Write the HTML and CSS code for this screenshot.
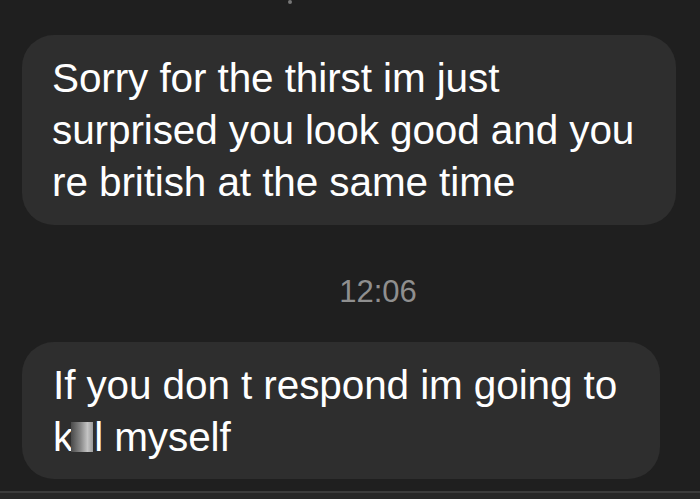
FILE: index.html
```html
<!DOCTYPE html>
<html>
<head>
<meta charset="utf-8">
<link rel="stylesheet" href="styles.css">
</head>
<body>
<div class="screen">
  <div class="top-mark"></div>
  <div class="bubble bubble-one">
    <p class="msg">Sorry for the thirst im just<br>surprised you look good and you<br>re british at the same time</p>
  </div>
  <div class="time">12:06</div>
  <div class="bubble bubble-two">
    <p class="msg">If you don t respond im going to<br>k<span class="censor"></span>l myself</p>
  </div>
  <div class="bottom-bar"></div>
</div>
</body>
</html>
```
FILE: styles.css
```css
html, body {
  margin: 0;
  padding: 0;
  background: #1f1f1f;
}
.screen {
  width: 700px;
  height: 499px;
  background: #1f1f1f;
  position: relative;
  overflow: hidden;
  font-family: "Liberation Sans", Arial, sans-serif;
  color: #ffffff;
  display: flex;
  flex-direction: column;
}
.top-mark {
  position: absolute;
  left: 288px;
  top: 0;
  width: 4px;
  height: 4px;
  border-radius: 2px;
  background: #777;
}
.bubble {
  background: #2e2e2e;
  border-radius: 32px;
}
.bubble-one {
  margin: 35px 24px 0 22px;
  padding: 17px 0 17px 30px;
}
.msg {
  margin: 0;
  font-size: 40.5px;
  line-height: 52px;
  letter-spacing: -0.1px;
  white-space: nowrap;
}
.time {
  margin-top: 49px;
  text-align: center;
  padding-left: 56px;
  color: #8f8f8f;
  font-size: 31px;
  line-height: 36px;
}
.bubble-two {
  margin: 32px 40px 0 22px;
  padding: 17px 0 16px 31px;
}
.censor {
  display: inline-block;
  width: 22px;
  height: 30px;
  margin: 0 1px 0 -2px;
  vertical-align: -1px;
  background: linear-gradient(90deg, #4a4a4a, #8a8a8a 45%, #c4c4c4 75%, #9a9a9a);
}
.bottom-bar {
  position: absolute;
  left: 0;
  right: 0;
  bottom: 0;
  height: 6px;
  border-top: 2px solid #3c3c3c;
  background: #272727;
}
```
